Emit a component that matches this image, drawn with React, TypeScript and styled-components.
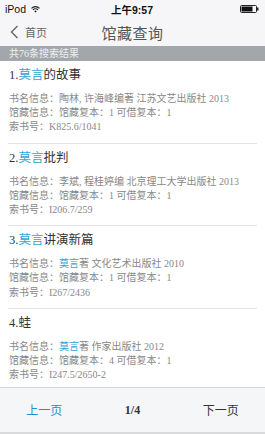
import React from "react";
import styled, { createGlobalStyle } from "styled-components";

const Global = createGlobalStyle`
  html, body { margin: 0; padding: 0; background: #fff; }
  body { width: 265px; height: 434px; overflow: hidden; }
`;

const Screen = styled.div`
  width: 265px;
  height: 434px;
  display: flex;
  flex-direction: column;
  background: #fff;
  font-family: "Liberation Serif", "Noto Sans CJK SC", serif;
  overflow: hidden;
`;

const Top = styled.div`
  background: #f6f6f8;
  display: flex;
  flex-direction: column;
`;

const StatusBar = styled.div`
  height: 18px;
  display: grid;
  grid-template-columns: 1fr auto 1fr;
  align-items: center;
  padding: 0 6px 0 5px;
  font-family: "Liberation Sans", "Noto Sans CJK SC", sans-serif;
  font-size: 10.5px;
  color: #111;
`;

const StatusLeft = styled.div`
  display: flex;
  align-items: center;
  gap: 5px;
`;

const StatusTime = styled.div`
  font-weight: bold;
`;

const StatusRight = styled.div`
  display: flex;
  justify-content: flex-end;
  align-items: center;
`;

const NavBar = styled.div`
  height: 28px;
  position: relative;
  display: flex;
  align-items: center;
  justify-content: center;
`;

const Back = styled.div`
  position: absolute;
  left: 10px;
  top: 0;
  bottom: 0;
  display: flex;
  align-items: center;
  gap: 6px;
  font-family: "Noto Sans CJK SC", sans-serif;
  font-size: 11px;
  color: #666;
`;

const NavTitle = styled.div`
  font-family: "Noto Sans CJK SC", sans-serif;
  font-size: 15px;
  color: #555;
  letter-spacing: 0.5px;
`;

const Band = styled.div`
  height: 15px;
  background: #a2a7ac;
  color: #eef0f2;
  font-size: 10px;
  line-height: 15px;
  padding-left: 9px;
  font-family: "Liberation Serif", "Noto Sans CJK SC", serif;
`;

const List = styled.div`
  flex: 1;
  display: flex;
  flex-direction: column;
  padding: 0 8px;
  overflow: hidden;
`;

const Item = styled.div<{ $last?: boolean }>`
  padding: 6px 1px 8px;
  border-bottom: ${(p) => (p.$last ? "none" : "1px solid #e4e4e4")};
`;

const Title = styled.div`
  font-size: 12.5px;
  line-height: 16px;
  color: #333;
  margin-bottom: 9px;
`;

const Hl = styled.span`
  color: #2fa6cf;
`;

const Line = styled.div`
  font-size: 10px;
  line-height: 14.2px;
  color: #888;
  white-space: nowrap;
`;

const Toolbar = styled.div`
  height: 47px;
  flex-shrink: 0;
  background: #f5f6f8;
  border-top: 1px solid #d6d8db;
  border-bottom: 2px solid #d9dadc;
  box-sizing: border-box;
  display: grid;
  grid-template-columns: 1fr 1fr 1fr;
  align-items: center;
  text-align: center;
  font-size: 12px;
`;

const PageBtn = styled.div<{ $active?: boolean }>`
  color: ${(p) => (p.$active ? "#2a8cd0" : "#333")};
`;

const PageNum = styled.div`
  font-weight: bold;
  color: #333;
`;

const Wifi = () => (
  <svg width="9" height="7" viewBox="0 0 9 7">
    <path d="M0.5 2.3 A5.6 5.6 0 0 1 8.5 2.3" stroke="#222" strokeWidth="1.1" fill="none" />
    <path d="M2 3.8 A3.4 3.4 0 0 1 7 3.8" stroke="#222" strokeWidth="1.1" fill="none" />
    <path d="M4.5 6.6 L3.3 5.2 A1.7 1.7 0 0 1 5.7 5.2 Z" fill="#222" />
  </svg>
);

const Battery = () => (
  <svg width="19" height="8" viewBox="0 0 19 8">
    <rect x="0.5" y="0.5" width="16" height="7" rx="1" fill="none" stroke="#222" strokeWidth="1" />
    <rect x="1.5" y="1.5" width="11" height="5" fill="#111" />
    <rect x="17" y="2.5" width="1.5" height="3" fill="#222" />
  </svg>
);

const Chevron = () => (
  <svg width="9" height="14" viewBox="0 0 9 14">
    <path d="M7.5 1 L1.5 7 L7.5 13" stroke="#666" strokeWidth="1.4" fill="none" />
  </svg>
);

type Book = { n: number; title: React.ReactNode; info: React.ReactNode; hold: string; call: string };

const books: Book[] = [
  { n: 1, title: <><Hl>莫言</Hl>的故事</>, info: <>陶林, 许海峰编著 江苏文艺出版社 2013</>, hold: "馆藏复本：1 可借复本：1", call: "K825.6/1041" },
  { n: 2, title: <><Hl>莫言</Hl>批判</>, info: <>李斌, 程桂婷编 北京理工大学出版社 2013</>, hold: "馆藏复本：1 可借复本：1", call: "I206.7/259" },
  { n: 3, title: <><Hl>莫言</Hl>讲演新篇</>, info: <><Hl>莫言</Hl>著 文化艺术出版社 2010</>, hold: "馆藏复本：1 可借复本：1", call: "I267/2436" },
  { n: 4, title: <>蛙</>, info: <><Hl>莫言</Hl>著 作家出版社 2012</>, hold: "馆藏复本：4 可借复本：1", call: "I247.5/2650-2" },
];

export default function App() {
  return (
    <Screen>
      <Global />
      <Top>
        <StatusBar>
          <StatusLeft>
            <span>iPod</span>
            <Wifi />
          </StatusLeft>
          <StatusTime>上午9:57</StatusTime>
          <StatusRight>
            <Battery />
          </StatusRight>
        </StatusBar>
        <NavBar>
          <Back>
            <Chevron />
            <span>首页</span>
          </Back>
          <NavTitle>馆藏查询</NavTitle>
        </NavBar>
      </Top>
      <Band>共76条搜索结果</Band>
      <List>
        {books.map((b, i) => (
          <Item key={b.n} $last={i === books.length - 1}>
            <Title>
              {b.n}.{b.title}
            </Title>
            <Line>书名信息：{b.info}</Line>
            <Line>馆藏信息：{b.hold}</Line>
            <Line>索书号：{b.call}</Line>
          </Item>
        ))}
      </List>
      <Toolbar>
        <PageBtn $active>上一页</PageBtn>
        <PageNum>1/4</PageNum>
        <PageBtn>下一页</PageBtn>
      </Toolbar>
    </Screen>
  );
}
